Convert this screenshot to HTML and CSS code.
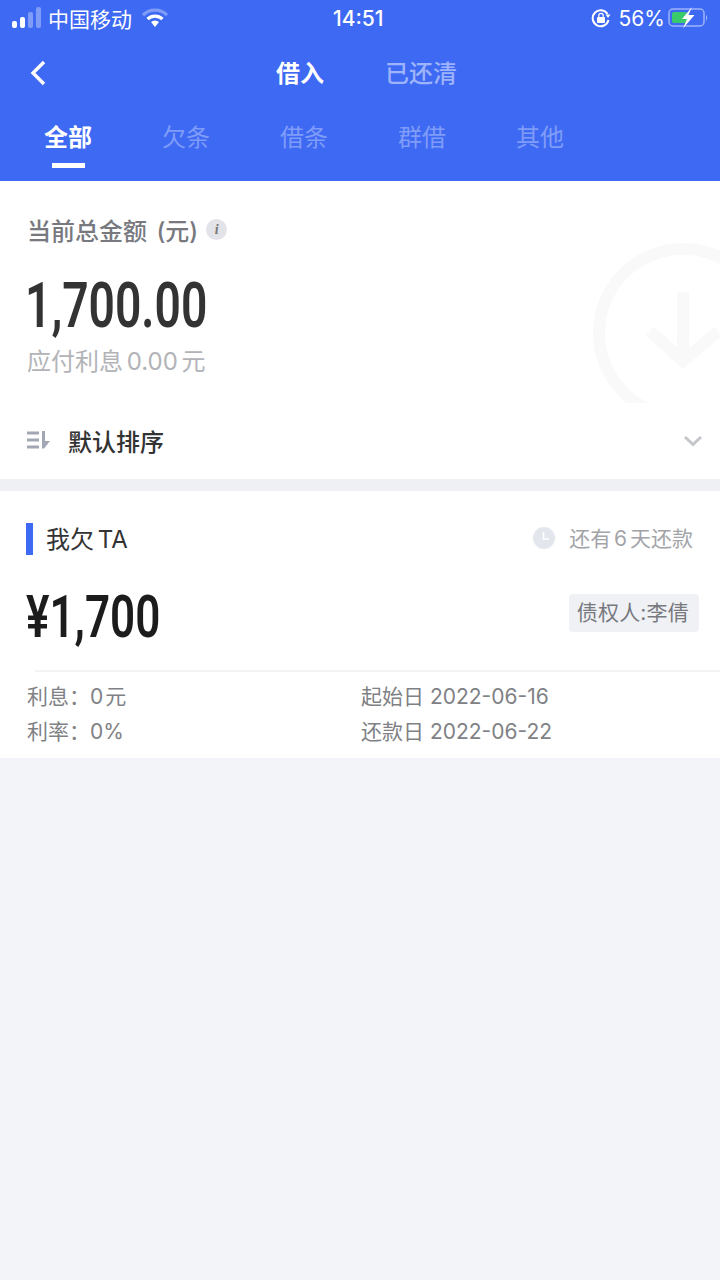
FILE: index.html
```html
<!DOCTYPE html>
<html lang="zh-CN">
<head>
<meta charset="UTF-8">
<meta name="viewport" content="width=device-width, initial-scale=1.0">
<title>借入</title>
<link rel="stylesheet" href="styles.css">
</head>
<body>

<header class="header">
  <div class="status">
    <div class="status-left">
      <svg class="signal" width="32" height="24" viewBox="0 0 32 24">
        <rect x="0" y="15" width="5" height="7" rx="2" fill="#fff"/>
        <rect x="8" y="11" width="5" height="11" rx="2" fill="#fff"/>
        <rect x="16" y="6" width="5" height="16" rx="2" fill="#7f9cf8"/>
        <rect x="24" y="1" width="5" height="21" rx="2" fill="#7f9cf8"/>
      </svg>
      <span>中国移动</span>
      <svg class="wifi" width="26" height="20" viewBox="0 0 26 20">
        <path d="M1 7 A17 17 0 0 1 25 7" fill="none" stroke="#7f9cf8" stroke-width="3.2"/>
        <path d="M5.5 11 A11 11 0 0 1 20.5 11" fill="none" stroke="#fff" stroke-width="3.2"/>
        <path d="M9 14 A6 6 0 0 1 17 14 L13 19 Z" fill="#fff"/>
      </svg>
    </div>
    <div class="status-time">14:51</div>
    <div class="status-right">
      <svg width="20" height="20" viewBox="0 0 20 20">
        <path d="M16.5 6 A8 8 0 1 0 17.5 12" fill="none" stroke="#fff" stroke-width="2"/>
        <path d="M14.5 6.5 L19.5 6.5 L17 10 Z" fill="#fff"/>
        <rect x="6" y="9" width="8" height="6" rx="1" fill="#fff"/>
        <path d="M7.8 9 V7.6 A2.2 2.2 0 0 1 12.2 7.6 V9" fill="none" stroke="#fff" stroke-width="1.2"/>
      </svg>
      <span class="pct">56%</span>
      <svg class="battery" width="42" height="22" viewBox="0 0 42 22">
        <rect x="1" y="2" width="35" height="17" rx="4" fill="none" stroke="#9db3fa" stroke-width="1.5"/>
        <rect x="4" y="5" width="15" height="11" rx="2" fill="#3ac96b"/>
        <path d="M38 8 Q40.5 10.5 38 14 Z" fill="#9db3fa"/>
        <path d="M24 0 L14 12 H19 L15 21.5 L26.5 8 H20.5 Z" fill="#fff"/>
      </svg>
    </div>
  </div>

  <nav class="topnav">
    <svg class="back" width="18" height="26" viewBox="0 0 18 26">
      <path d="M14 2 L3 13 L14 24" fill="none" stroke="#fff" stroke-width="3.4"/>
    </svg>
    <span class="topnav-item active">借入</span>
    <span class="topnav-item">已还清</span>
  </nav>

  <div class="tabs">
    <span class="tab active">全部</span>
    <span class="tab">欠条</span>
    <span class="tab">借条</span>
    <span class="tab">群借</span>
    <span class="tab">其他</span>
  </div>
</header>

<section class="summary">
  <svg class="watermark" width="128" height="160" viewBox="0 0 128 160">
    <circle cx="91" cy="90" r="84" fill="none" stroke="#f9f9f9" stroke-width="12"/>
    <path d="M91 49 V115 M58 88 L91 118 L126 88" fill="none" stroke="#f9f9f9" stroke-width="12"/>
  </svg>
  <div class="summary-title">
    <span>当前总金额 (元)</span>
    <span class="info">i</span>
  </div>
  <div class="total"><span class="num total-num">1,700.00</span></div>
  <div class="interest">应付利息 0.00 元</div>
  <div class="sort">
    <svg width="24" height="20" viewBox="0 0 24 20">
      <path d="M0 3 H12 M0 10 H12 M0 17 H12" stroke="#a3a7b3" stroke-width="2.8" fill="none"/>
      <path d="M15 1 H18 V11 H23 L17 18.5 H15 Z" fill="#a3a7b3"/>
    </svg>
    <span class="sort-label">默认排序</span>
    <svg class="chevron" width="20" height="12" viewBox="0 0 20 12">
      <path d="M2 2 L10 9.5 L18 2" fill="none" stroke="#c4c6cb" stroke-width="3"/>
    </svg>
  </div>
</section>

<section class="card">
  <div class="card-top">
    <div class="card-type"><span class="bar"></span>我欠 TA</div>
    <div class="due">
      <svg class="clock" width="22" height="22" viewBox="0 0 22 22">
        <circle cx="11" cy="11" r="11" fill="#e3e6ec"/>
        <path d="M10.5 5 V12 H16" fill="none" stroke="#fff" stroke-width="1.6"/>
      </svg>
      <span>还有 6 天还款</span>
    </div>
  </div>
  <div class="card-mid">
    <span class="num money">¥1,700</span>
    <span class="creditor">债权人:李倩</span>
  </div>
  <div class="details">
    <div class="detail detail-short">利息：0 元</div>
    <div class="detail">起始日 2022-06-16</div>
    <div class="detail detail-short">利率：0%</div>
    <div class="detail">还款日 2022-06-22</div>
  </div>
</section>

</body>
</html>
```

FILE: styles.css
```css
body { margin: 0; width: 720px; min-height: 1280px; background-color: #f2f4f9; font-family: Inter, "Noto Sans CJK SC", sans-serif; color: #333; }

.header { height: 181px; background-color: #3e69f3; color: #fff; overflow: hidden; }
.status { display: flex; justify-content: space-between; align-items: center; height: 36px; position: relative; padding: 0 10px 0 12px; font-size: 21px; }
.status-left { display: flex; align-items: center; gap: 4px; }
.wifi { margin-left: 6px; }
.status-time { position: absolute; left: 333px; font-weight: 500; }
.status-right { display: flex; align-items: center; gap: 8px; }
.pct { margin-right: -5px; }

.topnav { display: flex; align-items: center; box-sizing: border-box; height: 76px; padding-bottom: 6px; position: relative; padding-left: 276px; gap: 61px; font-size: 24px; }
.back { position: absolute; left: 30px; top: 24px; }
.topnav-item { color: #9db3fa; font-weight: 500; }
.topnav-item.active { color: #fff; font-weight: 700; }

.tabs { display: flex; gap: 70px; padding: 1px 0 0 44px; font-size: 24px; }
.tab { color: #7f9cf8; position: relative; line-height: 50px; }
.tab.active { color: #fff; font-weight: 700; }
.tab.active::after { content: ""; position: absolute; left: 8px; bottom: -5px; width: 33px; height: 5px; background-color: #fff; }

.summary { height: 298px; background-color: #fff; position: relative; overflow: hidden; box-sizing: border-box; padding: 30px 27px 0 27px; }
.watermark { position: absolute; right: 0; top: 62px; }
.summary-title { display: flex; align-items: center; gap: 8px; font-size: 24px; font-weight: 500; color: #77797f; height: 36px; word-spacing: 3px; }
.info { width: 21px; height: 21px; border-radius: 50%; background-color: #e3e4e9; color: #777; font-family: "Liberation Serif", serif; font-style: italic; font-weight: 700; font-size: 14px; line-height: 21px; text-align: center; }

.num { display: inline-block; font-family: Roboto, sans-serif; font-weight: 600; transform-origin: left center; }
.total { height: 80px; margin: 22px 0 0 -2px; line-height: 74px; }
.total-num { font-size: 63px; color: #333; transform: scaleX(0.733); }
.interest { font-size: 24px; color: #b2b3b7; margin-top: -5px; line-height: 36px; word-spacing: -3px; }

.sort { display: flex; align-items: center; margin-top: 42px; height: 36px; }
.sort-label { font-size: 24px; font-weight: 500; color: #333; margin-left: 17px; }
.chevron { margin-left: auto; position: relative; left: 10px; top: 1px; }

.card { margin-top: 12px; height: 267px; background-color: #fff; box-sizing: border-box; padding-top: 30px; box-shadow: 0 -12px 0 #eef0f3; }
.card-top { display: flex; justify-content: space-between; align-items: center; height: 32px; padding: 0 27px 0 26px; }
.card-type { display: flex; align-items: center; font-size: 24px; color: #333; word-spacing: -3px; }
.bar { width: 7px; height: 32px; background-color: #3e69f3; margin: 3px 13px 0 0; }
.due { display: flex; align-items: center; gap: 14px; font-size: 21px; color: #a3a4a8; word-spacing: -3px; }
.clock { margin-top: 2px; }

.card-mid { display: flex; justify-content: space-between; align-items: center; height: 76px; margin-top: 22px; padding: 0 21px 0 26px; }
.money { font-size: 60px; color: #1c1c1c; transform: scaleX(0.733); padding-top: 6px; }
.creditor { background-color: #f0f1f5; color: #77797f; font-size: 21px; letter-spacing: 0.2px; padding: 0 10px 0 8px; height: 38px; line-height: 38px; border-radius: 4px; }

.details { margin: 19px 0 0 35px; border-top: 2px solid #f2f3f5; display: grid; grid-template-columns: 334px 1fr; padding-top: 7px; }
.detail { font-size: 21px; line-height: 35px; color: #808185; margin-left: -8px; }
.detail-short { word-spacing: -4px; }
```
